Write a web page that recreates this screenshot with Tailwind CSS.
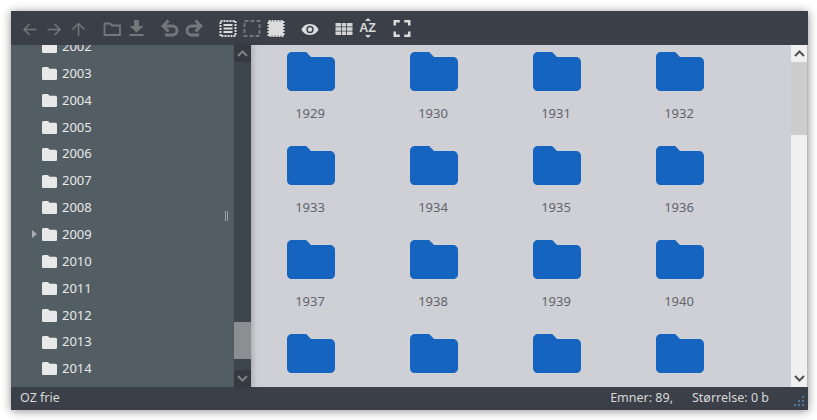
<!DOCTYPE html>
<html lang="da">
<head>
    <meta charset="UTF-8">
    <title>OZ frie</title>
    <script src="https://cdn.jsdelivr.net/npm/@tailwindcss/browser@4"></script>
</head>
<body class="bg-white h-[420px] overflow-hidden font-['Noto_Sans',sans-serif]">
    <div class="w-[817px] h-[420px] pt-[11px] pl-[11px]">
        <div class="w-[797px] h-[399px] flex flex-col shadow-[0_1px_9px_rgba(0,0,0,0.45)]">
            <!-- toolbar -->
            <div class="h-[34px] shrink-0 bg-[#3b4048] flex items-center pl-[6.5px] text-[#73777b]">
                <svg class="w-6 h-[18px]" viewBox="0 0 24 18" fill="none" stroke="currentColor" stroke-width="1.5"><path d="M18.500 10.500H6.500M11.500 5l-5.500 5.500 5.500 5.500"/></svg>
                <svg class="w-6 h-[18px]" viewBox="0 0 24 18" fill="none" stroke="currentColor" stroke-width="1.5"><path d="M5.500 10.500h12M12.500 5l5.500 5.500-5.500 5.500"/></svg>
                <svg class="w-6 h-[18px]" viewBox="0 0 24 18" fill="none" stroke="currentColor" stroke-width="1.5"><path d="M12.500 17V5M6.500 10.500l6-6 6 6"/></svg>
                <svg class="w-6 h-[18px] ml-[10px]" viewBox="0 0 24 18" fill="none" stroke="currentColor" stroke-width="1.800"><path d="M4.500 4.500h5.500l2 2h8v9.500H4.500z"/></svg>
                <svg class="w-6 h-[18px]" viewBox="0 0 24 18" fill="currentColor"><path d="M10 1h5v6h4.500l-7 6.500-7-6.500H10zM5.500 15h14v2h-14z"/></svg>
                <svg class="w-6 h-[18px] ml-[10px]" viewBox="0 0 24 18" fill="none" stroke="currentColor" stroke-width="3"><path d="M10.500 1.500 5 7l5.500 5.500M5.500 7h9a4.500 4.500 0 0 1 0 9H7"/></svg>
                <svg class="w-6 h-[18px]" viewBox="0 0 24 18" fill="none" stroke="currentColor" stroke-width="3"><path d="M13.500 1.500 19 7l-5.500 5.500M18.500 7h-9a4.500 4.500 0 0 0 0 9H17"/></svg>
                <svg class="w-6 h-[18px] ml-[10px] text-[#dcdcdc]" viewBox="0 0 24 18" fill="none" stroke="currentColor"><rect x="4.500" y="2" width="15" height="15" stroke-width="2" stroke-dasharray="2 1"/><path d="M7.500 6h9M7.500 9.500h9M7.500 13h9" stroke-width="2"/></svg>
                <svg class="w-6 h-[18px]" viewBox="0 0 24 18" fill="none" stroke="currentColor"><rect x="4.500" y="2" width="15" height="15" stroke-width="2" stroke-dasharray="4 2"/></svg>
                <svg class="w-6 h-[18px] text-[#dcdcdc]" viewBox="0 0 24 18" fill="none" stroke="currentColor"><rect x="4.500" y="2" width="15" height="15" stroke-width="2" stroke-dasharray="2 1"/><rect x="5" y="2.500" width="14" height="14" fill="currentColor" stroke="none"/></svg>
                <svg class="w-6 h-[18px] ml-[10px] text-[#dcdcdc]" viewBox="0 0 24 18" fill="currentColor"><path fill-rule="evenodd" d="M12 5C7.500 5 4.500 8 3.500 10.500c1 2.500 4 5.500 8.500 5.500s7.500-3 8.500-5.500C19.500 8 16.500 5 12 5zM12 6.800a3.700 3.700 0 1 1 0 7.400 3.700 3.700 0 0 1 0-7.400z"/><circle cx="12" cy="10.500" r="2.200"/></svg>
                <svg class="w-6 h-[18px] ml-[10px] text-[#d4d4d4]" viewBox="0 0 24 18" fill="currentColor"><path d="M3.500 4H9v3.500H3.500zM9.800 4h4.400v3.500H9.800zM15 4h5.500v3.500H15zM3.500 8.300H9v3.400H3.500zM9.800 8.300h4.400v3.400H9.800zM15 8.300h5.500v3.400H15zM3.500 12.500H9V16H3.500zM9.800 12.500h4.400V16H9.800zM15 12.500h5.500V16H15z"/></svg>
                <div class="w-6 h-[18px] relative flex items-center justify-center pt-[1px] text-[#d8d8d8] text-[12.500px] leading-none font-bold font-['Liberation_Sans',sans-serif]">
                    AZ
                    <span class="absolute left-[9px] top-[-1px] border-x-[3px] border-x-transparent border-b-[3px] border-b-[#d8d8d8]"></span>
                    <span class="absolute left-[9px] bottom-[-1px] border-x-[3px] border-x-transparent border-t-[3px] border-t-[#d8d8d8]"></span>
                </div>
                <svg class="w-6 h-[18px] ml-[10px] text-[#dcdcdc]" viewBox="0 0 24 18" fill="none" stroke="currentColor" stroke-width="2.500"><path d="M4.750 6.500V2.250h5M14.250 2.250h5v4.250M19.250 12.500v4.250h-5M9.750 16.750h-5V12.500"/></svg>
            </div>

            <div class="flex-1 flex min-h-0">
                <!-- tree -->
                <div class="w-[223px] shrink-0 bg-[#535e64] overflow-hidden relative text-[13px] text-[#e8e8e8]">
                    <div class="mt-[-11.600px] pl-[31px]">
                        <div class="h-[26.850px] flex items-center gap-[5px]"><svg class="w-[15px] h-[13px]" viewBox="2 4 20 16" preserveAspectRatio="none" fill="currentColor"><path d="M10 4H4c-1.100 0-2 .9-2 2v12c0 1.100.9 2 2 2h16c1.100 0 2-.9 2-2V8c0-1.100-.9-2-2-2h-8l-2-2z"/></svg>2002</div>
                        <div class="h-[26.850px] flex items-center gap-[5px]"><svg class="w-[15px] h-[13px]" viewBox="2 4 20 16" preserveAspectRatio="none" fill="currentColor"><path d="M10 4H4c-1.100 0-2 .9-2 2v12c0 1.100.9 2 2 2h16c1.100 0 2-.9 2-2V8c0-1.100-.9-2-2-2h-8l-2-2z"/></svg>2003</div>
                        <div class="h-[26.850px] flex items-center gap-[5px]"><svg class="w-[15px] h-[13px]" viewBox="2 4 20 16" preserveAspectRatio="none" fill="currentColor"><path d="M10 4H4c-1.100 0-2 .9-2 2v12c0 1.100.9 2 2 2h16c1.100 0 2-.9 2-2V8c0-1.100-.9-2-2-2h-8l-2-2z"/></svg>2004</div>
                        <div class="h-[26.850px] flex items-center gap-[5px]"><svg class="w-[15px] h-[13px]" viewBox="2 4 20 16" preserveAspectRatio="none" fill="currentColor"><path d="M10 4H4c-1.100 0-2 .9-2 2v12c0 1.100.9 2 2 2h16c1.100 0 2-.9 2-2V8c0-1.100-.9-2-2-2h-8l-2-2z"/></svg>2005</div>
                        <div class="h-[26.850px] flex items-center gap-[5px]"><svg class="w-[15px] h-[13px]" viewBox="2 4 20 16" preserveAspectRatio="none" fill="currentColor"><path d="M10 4H4c-1.100 0-2 .9-2 2v12c0 1.100.9 2 2 2h16c1.100 0 2-.9 2-2V8c0-1.100-.9-2-2-2h-8l-2-2z"/></svg>2006</div>
                        <div class="h-[26.850px] flex items-center gap-[5px]"><svg class="w-[15px] h-[13px]" viewBox="2 4 20 16" preserveAspectRatio="none" fill="currentColor"><path d="M10 4H4c-1.100 0-2 .9-2 2v12c0 1.100.9 2 2 2h16c1.100 0 2-.9 2-2V8c0-1.100-.9-2-2-2h-8l-2-2z"/></svg>2007</div>
                        <div class="h-[26.850px] flex items-center gap-[5px]"><svg class="w-[15px] h-[13px]" viewBox="2 4 20 16" preserveAspectRatio="none" fill="currentColor"><path d="M10 4H4c-1.100 0-2 .9-2 2v12c0 1.100.9 2 2 2h16c1.100 0 2-.9 2-2V8c0-1.100-.9-2-2-2h-8l-2-2z"/></svg>2008</div>
                        <div class="h-[26.850px] flex items-center gap-[5px] relative"><span class="absolute left-[-10px] top-[9px] border-y-[4.500px] border-y-transparent border-l-[5px] border-l-[#a9acae]"></span><svg class="w-[15px] h-[13px]" viewBox="2 4 20 16" preserveAspectRatio="none" fill="currentColor"><path d="M10 4H4c-1.100 0-2 .9-2 2v12c0 1.100.9 2 2 2h16c1.100 0 2-.9 2-2V8c0-1.100-.9-2-2-2h-8l-2-2z"/></svg>2009</div>
                        <div class="h-[26.850px] flex items-center gap-[5px]"><svg class="w-[15px] h-[13px]" viewBox="2 4 20 16" preserveAspectRatio="none" fill="currentColor"><path d="M10 4H4c-1.100 0-2 .9-2 2v12c0 1.100.9 2 2 2h16c1.100 0 2-.9 2-2V8c0-1.100-.9-2-2-2h-8l-2-2z"/></svg>2010</div>
                        <div class="h-[26.850px] flex items-center gap-[5px]"><svg class="w-[15px] h-[13px]" viewBox="2 4 20 16" preserveAspectRatio="none" fill="currentColor"><path d="M10 4H4c-1.100 0-2 .9-2 2v12c0 1.100.9 2 2 2h16c1.100 0 2-.9 2-2V8c0-1.100-.9-2-2-2h-8l-2-2z"/></svg>2011</div>
                        <div class="h-[26.850px] flex items-center gap-[5px]"><svg class="w-[15px] h-[13px]" viewBox="2 4 20 16" preserveAspectRatio="none" fill="currentColor"><path d="M10 4H4c-1.100 0-2 .9-2 2v12c0 1.100.9 2 2 2h16c1.100 0 2-.9 2-2V8c0-1.100-.9-2-2-2h-8l-2-2z"/></svg>2012</div>
                        <div class="h-[26.850px] flex items-center gap-[5px]"><svg class="w-[15px] h-[13px]" viewBox="2 4 20 16" preserveAspectRatio="none" fill="currentColor"><path d="M10 4H4c-1.100 0-2 .9-2 2v12c0 1.100.9 2 2 2h16c1.100 0 2-.9 2-2V8c0-1.100-.9-2-2-2h-8l-2-2z"/></svg>2013</div>
                        <div class="h-[26.850px] flex items-center gap-[5px]"><svg class="w-[15px] h-[13px]" viewBox="2 4 20 16" preserveAspectRatio="none" fill="currentColor"><path d="M10 4H4c-1.100 0-2 .9-2 2v12c0 1.100.9 2 2 2h16c1.100 0 2-.9 2-2V8c0-1.100-.9-2-2-2h-8l-2-2z"/></svg>2014</div>
                    </div>
                    <!-- splitter handle -->
                    <div class="absolute right-[6px] top-[166px] w-[3px] h-[10px] border-x border-[#9aa0a3]"></div>
                </div>

                <!-- tree scrollbar -->
                <div class="w-[17px] shrink-0 bg-[#3f454c] flex flex-col relative z-10 shadow-[2px_0_5px_rgba(0,0,0,0.18)]">
                    <div class="h-[17px] bg-[#353a41] flex items-center justify-center text-[#7d8287]">
                        <svg class="w-[11px] h-[7px]" viewBox="0 0 11 7" fill="none" stroke="currentColor" stroke-width="2"><path d="M1 6l4.500-4.500L10 6"/></svg>
                    </div>
                    <div class="h-[260px]"></div>
                    <div class="h-[37px] bg-[#8a8f91]"></div>
                    <div class="flex-1"></div>
                    <div class="h-[17px] bg-[#353a41] flex items-center justify-center text-[#7d8287]">
                        <svg class="w-[11px] h-[7px]" viewBox="0 0 11 7" fill="none" stroke="currentColor" stroke-width="2"><path d="M1 1l4.500 4.500L10 1"/></svg>
                    </div>
                </div>

                <!-- folders -->
                <div class="flex-1 min-w-0 bg-[#cfd0d6] overflow-hidden pt-[7px] pl-[2.500px] grid grid-cols-[repeat(4,115px)] gap-x-2 auto-rows-[94px] text-[13px] text-[#62656b]">
                    <div class="flex flex-col items-center"><svg class="w-12 h-[39px] text-[#1565c0]" viewBox="2 4 20 16" preserveAspectRatio="none" fill="currentColor"><path d="M10 4H4c-1.100 0-2 .9-2 2v12c0 1.100.9 2 2 2h16c1.100 0 2-.9 2-2V8c0-1.100-.9-2-2-2h-8l-2-2z"/></svg><span class="mt-[13px] mr-[2px] leading-[18px]">1929</span></div>
                    <div class="flex flex-col items-center"><svg class="w-12 h-[39px] text-[#1565c0]" viewBox="2 4 20 16" preserveAspectRatio="none" fill="currentColor"><path d="M10 4H4c-1.100 0-2 .9-2 2v12c0 1.100.9 2 2 2h16c1.100 0 2-.9 2-2V8c0-1.100-.9-2-2-2h-8l-2-2z"/></svg><span class="mt-[13px] mr-[2px] leading-[18px]">1930</span></div>
                    <div class="flex flex-col items-center"><svg class="w-12 h-[39px] text-[#1565c0]" viewBox="2 4 20 16" preserveAspectRatio="none" fill="currentColor"><path d="M10 4H4c-1.100 0-2 .9-2 2v12c0 1.100.9 2 2 2h16c1.100 0 2-.9 2-2V8c0-1.100-.9-2-2-2h-8l-2-2z"/></svg><span class="mt-[13px] mr-[2px] leading-[18px]">1931</span></div>
                    <div class="flex flex-col items-center"><svg class="w-12 h-[39px] text-[#1565c0]" viewBox="2 4 20 16" preserveAspectRatio="none" fill="currentColor"><path d="M10 4H4c-1.100 0-2 .9-2 2v12c0 1.100.9 2 2 2h16c1.100 0 2-.9 2-2V8c0-1.100-.9-2-2-2h-8l-2-2z"/></svg><span class="mt-[13px] mr-[2px] leading-[18px]">1932</span></div>
                    <div class="flex flex-col items-center"><svg class="w-12 h-[39px] text-[#1565c0]" viewBox="2 4 20 16" preserveAspectRatio="none" fill="currentColor"><path d="M10 4H4c-1.100 0-2 .9-2 2v12c0 1.100.9 2 2 2h16c1.100 0 2-.9 2-2V8c0-1.100-.9-2-2-2h-8l-2-2z"/></svg><span class="mt-[13px] mr-[2px] leading-[18px]">1933</span></div>
                    <div class="flex flex-col items-center"><svg class="w-12 h-[39px] text-[#1565c0]" viewBox="2 4 20 16" preserveAspectRatio="none" fill="currentColor"><path d="M10 4H4c-1.100 0-2 .9-2 2v12c0 1.100.9 2 2 2h16c1.100 0 2-.9 2-2V8c0-1.100-.9-2-2-2h-8l-2-2z"/></svg><span class="mt-[13px] mr-[2px] leading-[18px]">1934</span></div>
                    <div class="flex flex-col items-center"><svg class="w-12 h-[39px] text-[#1565c0]" viewBox="2 4 20 16" preserveAspectRatio="none" fill="currentColor"><path d="M10 4H4c-1.100 0-2 .9-2 2v12c0 1.100.9 2 2 2h16c1.100 0 2-.9 2-2V8c0-1.100-.9-2-2-2h-8l-2-2z"/></svg><span class="mt-[13px] mr-[2px] leading-[18px]">1935</span></div>
                    <div class="flex flex-col items-center"><svg class="w-12 h-[39px] text-[#1565c0]" viewBox="2 4 20 16" preserveAspectRatio="none" fill="currentColor"><path d="M10 4H4c-1.100 0-2 .9-2 2v12c0 1.100.9 2 2 2h16c1.100 0 2-.9 2-2V8c0-1.100-.9-2-2-2h-8l-2-2z"/></svg><span class="mt-[13px] mr-[2px] leading-[18px]">1936</span></div>
                    <div class="flex flex-col items-center"><svg class="w-12 h-[39px] text-[#1565c0]" viewBox="2 4 20 16" preserveAspectRatio="none" fill="currentColor"><path d="M10 4H4c-1.100 0-2 .9-2 2v12c0 1.100.9 2 2 2h16c1.100 0 2-.9 2-2V8c0-1.100-.9-2-2-2h-8l-2-2z"/></svg><span class="mt-[13px] mr-[2px] leading-[18px]">1937</span></div>
                    <div class="flex flex-col items-center"><svg class="w-12 h-[39px] text-[#1565c0]" viewBox="2 4 20 16" preserveAspectRatio="none" fill="currentColor"><path d="M10 4H4c-1.100 0-2 .9-2 2v12c0 1.100.9 2 2 2h16c1.100 0 2-.9 2-2V8c0-1.100-.9-2-2-2h-8l-2-2z"/></svg><span class="mt-[13px] mr-[2px] leading-[18px]">1938</span></div>
                    <div class="flex flex-col items-center"><svg class="w-12 h-[39px] text-[#1565c0]" viewBox="2 4 20 16" preserveAspectRatio="none" fill="currentColor"><path d="M10 4H4c-1.100 0-2 .9-2 2v12c0 1.100.9 2 2 2h16c1.100 0 2-.9 2-2V8c0-1.100-.9-2-2-2h-8l-2-2z"/></svg><span class="mt-[13px] mr-[2px] leading-[18px]">1939</span></div>
                    <div class="flex flex-col items-center"><svg class="w-12 h-[39px] text-[#1565c0]" viewBox="2 4 20 16" preserveAspectRatio="none" fill="currentColor"><path d="M10 4H4c-1.100 0-2 .9-2 2v12c0 1.100.9 2 2 2h16c1.100 0 2-.9 2-2V8c0-1.100-.9-2-2-2h-8l-2-2z"/></svg><span class="mt-[13px] mr-[2px] leading-[18px]">1940</span></div>
                    <div class="flex flex-col items-center"><svg class="w-12 h-[39px] text-[#1565c0]" viewBox="2 4 20 16" preserveAspectRatio="none" fill="currentColor"><path d="M10 4H4c-1.100 0-2 .9-2 2v12c0 1.100.9 2 2 2h16c1.100 0 2-.9 2-2V8c0-1.100-.9-2-2-2h-8l-2-2z"/></svg></div>
                    <div class="flex flex-col items-center"><svg class="w-12 h-[39px] text-[#1565c0]" viewBox="2 4 20 16" preserveAspectRatio="none" fill="currentColor"><path d="M10 4H4c-1.100 0-2 .9-2 2v12c0 1.100.9 2 2 2h16c1.100 0 2-.9 2-2V8c0-1.100-.9-2-2-2h-8l-2-2z"/></svg></div>
                    <div class="flex flex-col items-center"><svg class="w-12 h-[39px] text-[#1565c0]" viewBox="2 4 20 16" preserveAspectRatio="none" fill="currentColor"><path d="M10 4H4c-1.100 0-2 .9-2 2v12c0 1.100.9 2 2 2h16c1.100 0 2-.9 2-2V8c0-1.100-.9-2-2-2h-8l-2-2z"/></svg></div>
                    <div class="flex flex-col items-center"><svg class="w-12 h-[39px] text-[#1565c0]" viewBox="2 4 20 16" preserveAspectRatio="none" fill="currentColor"><path d="M10 4H4c-1.100 0-2 .9-2 2v12c0 1.100.9 2 2 2h16c1.100 0 2-.9 2-2V8c0-1.100-.9-2-2-2h-8l-2-2z"/></svg></div>
                </div>

                <!-- main scrollbar -->
                <div class="w-[17px] shrink-0 bg-[#f0f0f0] flex flex-col border-r border-[#b8b8b8]">
                    <div class="h-[17px] flex items-center justify-center text-[#505050]">
                        <svg class="w-[11px] h-[7px]" viewBox="0 0 11 7" fill="none" stroke="currentColor" stroke-width="2"><path d="M1 6l4.500-4.500L10 6"/></svg>
                    </div>
                    <div class="h-[73px] bg-[#cdcdcd]"></div>
                    <div class="flex-1"></div>
                    <div class="h-[17px] flex items-center justify-center text-[#505050]">
                        <svg class="w-[11px] h-[7px]" viewBox="0 0 11 7" fill="none" stroke="currentColor" stroke-width="2"><path d="M1 1l4.500 4.500L10 1"/></svg>
                    </div>
                </div>
            </div>

            <!-- status bar -->
            <div class="h-[23px] shrink-0 bg-[#3b4048] flex items-center text-[12.500px] text-[#d8d8d8] pl-[9px] relative">
                <span>OZ frie</span>
                <span class="ml-auto">Emner: 89,</span>
                <span class="ml-[19px] mr-[39px]">Størrelse: 0 b</span>
                <svg class="absolute right-[3px] bottom-[3px] w-[12px] h-[12px] text-[#4f7a9e]" viewBox="0 0 12 12" fill="currentColor"><path d="M9 1h2v2H9zM9 5h2v2H9zM5 5h2v2H5zM9 9h2v2H9zM5 9h2v2H5zM1 9h2v2H1z"/></svg>
            </div>
        </div>
    </div>
</body>
</html>
